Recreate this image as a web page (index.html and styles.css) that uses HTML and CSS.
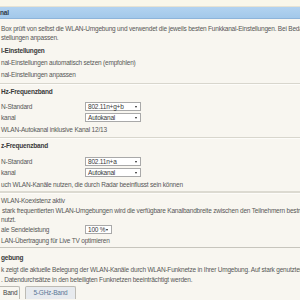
FILE: index.html
```html
<!DOCTYPE html>
<html lang="de">
<head>
<meta charset="utf-8">
<title>Funkkanal</title>
<link rel="stylesheet" href="styles.css">
</head>
<body>
<div class="page">
  <div class="topstrip"></div>
  <div class="titlebar">nal</div>

  <div class="sec sec1">
    <div class="para intro">
      <div>Box prüft von selbst die WLAN-Umgebung und verwendet die jeweils besten Funkkanal-Einstellungen. Bei Bedarf können Sie die Funkkanal-Ein</div>
      <div>stellungen anpassen.</div>
    </div>
    <div class="row h h1">l-Einstellungen</div>
    <div class="row r">nal-Einstellungen automatisch setzen (empfohlen)</div>
    <div class="row r">nal-Einstellungen anpassen</div>
  </div>
  <div class="sep"></div>

  <div class="sec sec2">
    <div class="row h h2">Hz-Frequenzband</div>
    <div class="row s s1">
      <span class="lbl">N-Standard</span>
      <span class="select wide">802.11n+g+b<i class="arrow"></i></span>
    </div>
    <div class="row s s2">
      <span class="lbl">kanal</span>
      <span class="select wide">Autokanal<i class="arrow"></i></span>
    </div>
    <div class="row cb">WLAN-Autokanal inklusive Kanal 12/13</div>
  </div>
  <div class="sep"></div>

  <div class="sec sec3">
    <div class="row h h3">z-Frequenzband</div>
    <div class="row s s1">
      <span class="lbl">N-Standard</span>
      <span class="select wide">802.11n+a<i class="arrow"></i></span>
    </div>
    <div class="row s s2">
      <span class="lbl">kanal</span>
      <span class="select wide">Autokanal<i class="arrow"></i></span>
    </div>
    <div class="row cb">uch WLAN-Kanäle nutzen, die durch Radar beeinflusst sein können</div>
  </div>
  <div class="sep double"></div>

  <div class="sec sec4">
    <div class="row cb c4">WLAN-Koexistenz aktiv</div>
    <div class="para desc">
      <div class="ind">stark frequentierten WLAN-Umgebungen wird die verfügbare Kanalbandbreite zwischen den Teilnehmern bestritten</div>
      <div>nutzt.</div>
    </div>
    <div class="row s s4">
      <span class="lbl">ale Sendeleistung</span>
      <span class="select narrow">100 %<i class="arrow"></i></span>
    </div>
    <div class="row cb c5">LAN-Übertragung für Live TV optimieren</div>
  </div>
  <div class="sep dark"></div>

  <div class="sec sec5">
    <div class="row h h5">gebung</div>
    <div class="para env">
      <div>k zeigt die aktuelle Belegung der WLAN-Kanäle durch WLAN-Funknetze in Ihrer Umgebung. Auf stark genutzten Kanälen können</div>
      <div>. Datendurchsätze in den beteiligten Funknetzen beeinträchtigt werden.</div>
    </div>
    <div class="tabs">
      <span class="tab active">Band</span>
      <span class="tab">5-GHz-Band</span>
    </div>
  </div>
</div>
</body>
</html>
```
FILE: styles.css
```css
html, body {
  margin: 0;
  padding: 0;
  background: #f8f6f0;
  overflow: hidden;
}
body {
  width: 300px;
  height: 300px;
  font-family: "Liberation Sans", Arial, sans-serif;
  font-size: 6.5px;
  letter-spacing: -0.2px;
  color: #575757;
  white-space: nowrap;
}
.page {
  width: 300px;
  overflow: hidden;
}
.topstrip {
  height: 6px;
  background: #f9f7ea;
  border-bottom: 1px solid #e6e3d4;
}
.titlebar {
  height: 11px;
  line-height: 11px;
  background: linear-gradient(#b2d3f0, #a2c8ea);
  border-bottom: 1px solid #8db4da;
  font-weight: bold;
  color: #2f3a46;
}
.sec {
  display: flex;
  flex-direction: column;
  padding-left: 1px;
}
.row {
  display: flex;
  align-items: center;
}
.para {
  line-height: 9px;
}
.h {
  font-weight: bold;
  color: #3a3a3a;
}
.sec1 { padding-top: 5px; padding-bottom: 3px; }
.intro { height: 18px; }
.h1 { height: 12px; margin-top: 2px; }
.r { height: 12px; }

.sep {
  height: 1px;
  background: #d8d6cd;
  border-bottom: 1px solid #fdfcf9;
}
.sep.double {
  height: 2px;
  background: #dcdad1;
}
.sep.dark {
  height: 1px;
  background: #c7c5bd;
  border-bottom: none;
}

.sec2 { padding-bottom: 2px; }
.h2 { height: 11px; margin-top: 1px; }
.s { height: 11px; }
.sec2 .s1 { margin-top: 4px; }
.cb { height: 12px; }

.sec3 { padding-bottom: 1px; }
.h3 { height: 13px; }
.sec3 .s1 { margin-top: 4px; }

.lbl {
  width: 84px;
  flex: none;
}
.select {
  position: relative;
  box-sizing: border-box;
  height: 9px;
  line-height: 7px;
  background: #fff;
  border: 1px solid #a9a9a9;
  padding-left: 2px;
  color: #3a3a3a;
}
.select.wide { width: 56px; }
.select.narrow { width: 27px; }
.arrow {
  position: absolute;
  right: 3px;
  top: 3px;
  width: 0;
  height: 0;
  border-left: 1.5px solid transparent;
  border-right: 1.5px solid transparent;
  border-top: 2px solid #222;
}

.sec4 { padding-bottom: 1px; }
.c4 { height: 12px; }
.desc { height: 18px; }
.ind { padding-left: 1px; }
.s4 { height: 10px; }
.c5 { height: 12px; }

.sec5 { padding-top: 3px; }
.h5 { height: 12px; }
.env { height: 19px; line-height: 9.5px; margin-top: 2px; }
.tabs {
  display: flex;
  gap: 5px;
  margin-top: 2px;
  margin-left: -20px;
}
.tab {
  height: 13px;
  line-height: 12px;
  box-sizing: border-box;
  border: 1px solid #bdbbb4;
  border-bottom: none;
  border-radius: 2px 2px 0 0;
  padding: 0 7px;
  background: #e7eaee;
  color: #5b7896;
}
.tab.active {
  background: #f8f6f0;
  color: #444;
  padding-left: 21px;
  padding-right: 2px;
}
```
